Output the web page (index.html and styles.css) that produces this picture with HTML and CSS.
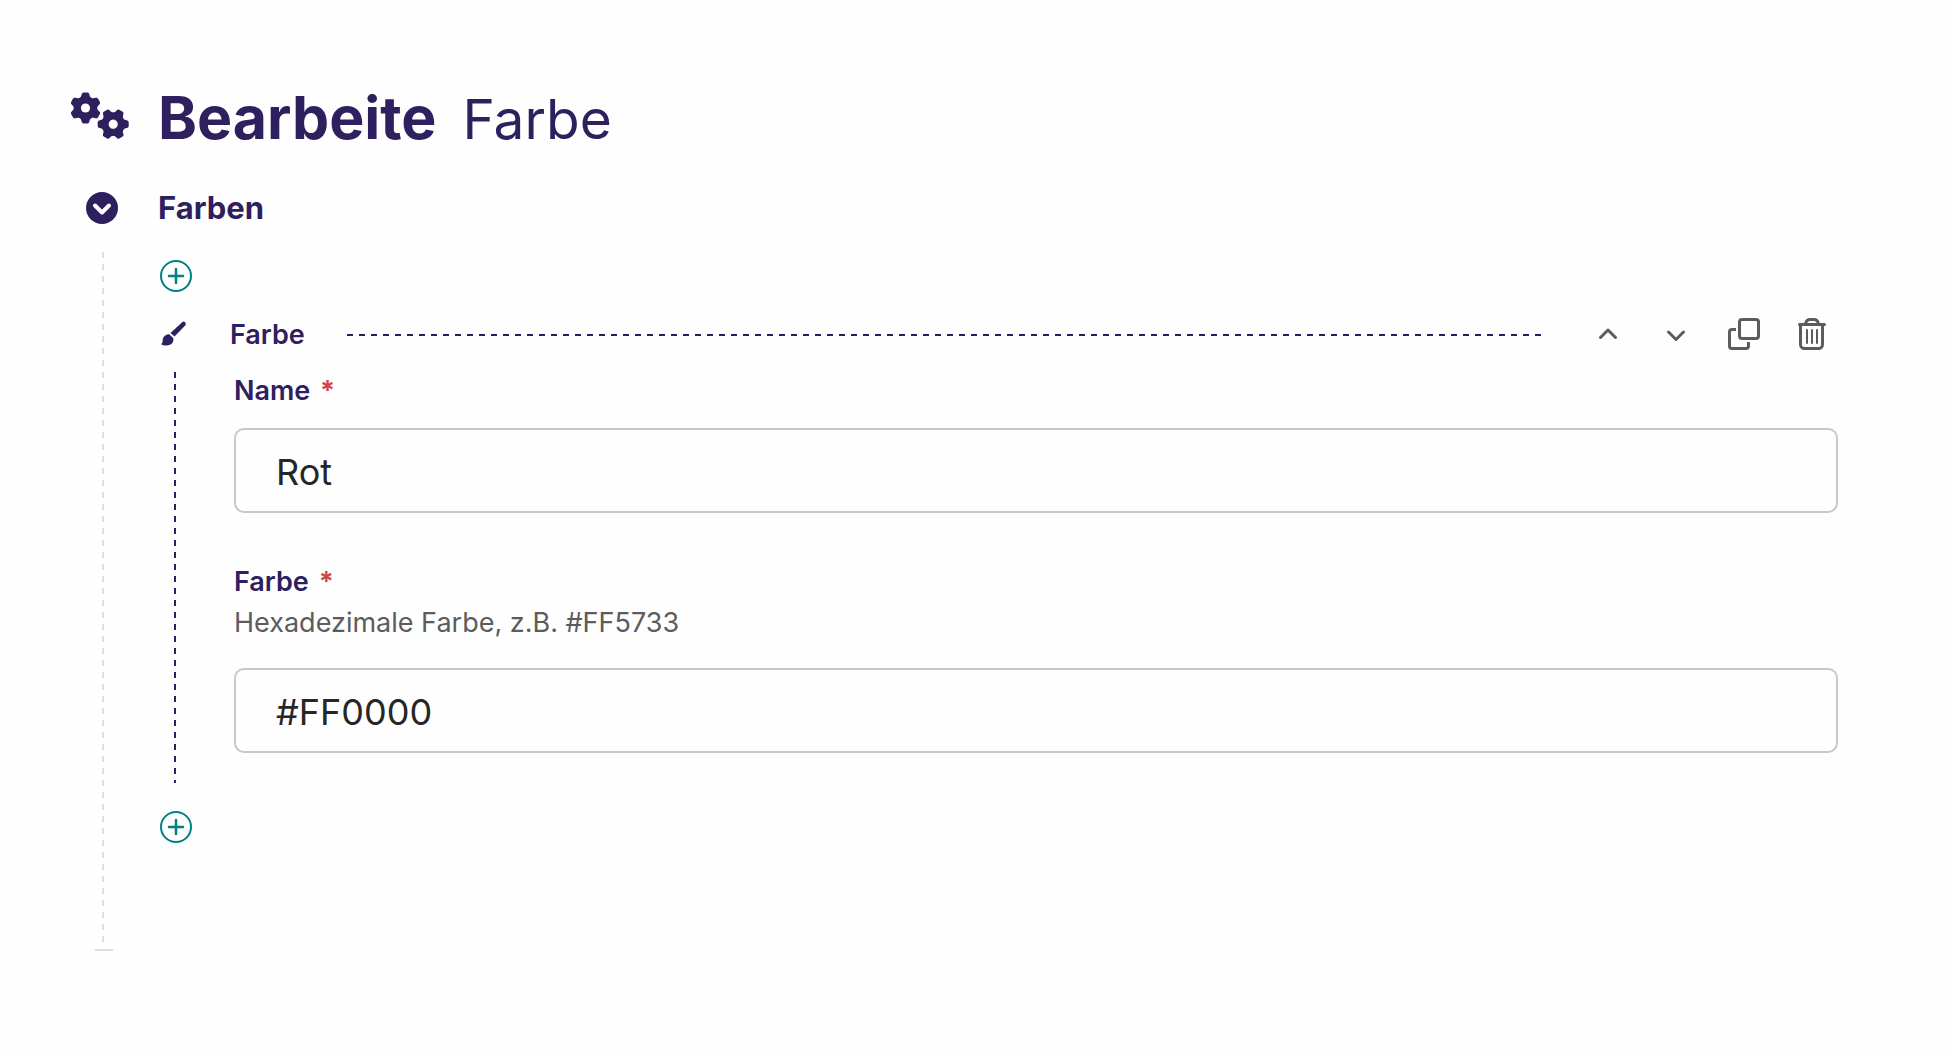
FILE: index.html
```html
<!DOCTYPE html>
<html lang="de">
<head>
<meta charset="utf-8">
<meta name="viewport" content="width=device-width, initial-scale=1">
<title>Bearbeite Farbe</title>
<link rel="stylesheet" href="styles.css">
</head>
<body>
<main class="page">
  <header class="page-head">
    <svg class="gears" viewBox="0 0 60 48" aria-hidden="true">
      <defs>
        <path id="teeth" d="M-6 -10 C-4.500 -11 -4.200 -12 -3.900 -13.500 Q-3.500 -15.500 -2 -15.500 H2 Q3.500 -15.500 3.900 -13.500 C4.200 -12 4.500 -11 6 -10 L6 10 C4.500 11 4.200 12 3.900 13.500 Q3.500 15.500 2 15.500 H-2 Q-3.500 15.500 -3.900 13.500 C-4.200 12 -4.500 11 -6 10 Z"/>
        <mask id="hub" maskUnits="userSpaceOnUse" x="-17" y="-17" width="34" height="34">
          <rect x="-17" y="-17" width="34" height="34" fill="#fff"/>
          <circle r="4.600" fill="#000"/>
        </mask>
        <g id="gear" mask="url(#hub)">
          <use href="#teeth"/>
          <use href="#teeth" transform="rotate(60)"/>
          <use href="#teeth" transform="rotate(120)"/>
        </g>
      </defs>
      <g fill="currentColor">
        <use href="#gear" transform="translate(15.500 16)"/>
        <use href="#gear" transform="translate(43.200 32.200) rotate(30)"/>
      </g>
    </svg>
    <h1 class="title"><strong>Bearbeite</strong> <span class="title-type">Farbe</span></h1>
  </header>

  <section class="group">
    <div class="group-side">
      <button class="icon-button toggle" type="button" aria-label="Farben einklappen" aria-expanded="true">
        <svg viewBox="0 0 32 32" aria-hidden="true"><circle cx="16" cy="16" r="16" fill="currentColor"/><path d="M9 13.500l7 7 7-7" fill="none" stroke="#fff" stroke-width="4" stroke-linecap="round" stroke-linejoin="round"/></svg>
      </button>
      <div class="group-rail"></div>
    </div>
    <div class="group-main">
      <h2 class="group-title">Farben</h2>
      <button class="icon-button add" type="button" aria-label="Farbe hinzufügen">
        <svg viewBox="0 0 32 32" fill="none" stroke="currentColor" stroke-width="2" aria-hidden="true"><circle cx="16" cy="16" r="15"/><path d="M16 9v14M9 16h14" stroke-width="2.500" stroke-linecap="round"/></svg>
      </button>
      <article class="block">
        <header class="block-head">
          <svg class="brush" viewBox="0 0 32 32" fill="currentColor" aria-hidden="true"><path d="M22.200 4.200a2.200 2.200 0 0 1 3 3.200L14.500 18.600 10.500 15z"/><path d="M9.200 16.200l4 3.800c.8 3-.7 5.600-3.200 6.800-3 1.200-6.500.7-9.200-.9 2-.5 1.700-1.700 1.900-4 .3-3.200 2.900-5.700 6.500-5.700z"/></svg>
          <h3 class="block-title">Farbe</h3>
          <div class="block-line"></div>
          <div class="actions">
            <button class="icon-button" type="button" aria-label="Nach oben">
              <svg viewBox="0 0 32 32" fill="none" stroke="currentColor" stroke-width="3" stroke-linecap="round" stroke-linejoin="round" aria-hidden="true"><path d="M8.500 19.500l7.500-7.500 7.500 7.500"/></svg>
            </button>
            <button class="icon-button" type="button" aria-label="Nach unten">
              <svg viewBox="0 0 32 32" fill="none" stroke="currentColor" stroke-width="3" stroke-linecap="round" stroke-linejoin="round" aria-hidden="true"><path d="M8.500 14l7.500 7.500 7.500-7.500"/></svg>
            </button>
            <button class="icon-button" type="button" aria-label="Duplizieren">
              <svg viewBox="0 0 32 32" fill="none" stroke="currentColor" stroke-width="3" aria-hidden="true"><rect x="11.500" y="1.500" width="19" height="19" rx="2.500"/><path d="M8 11.500H4A2.500 2.500 0 0 0 1.500 14v14A2.500 2.500 0 0 0 4 30.500h14a2.500 2.500 0 0 0 2.500-2.500v-4"/></svg>
            </button>
            <button class="icon-button" type="button" aria-label="Löschen">
              <svg viewBox="0 0 32 32" fill="none" stroke="currentColor" stroke-width="3" stroke-linecap="round" aria-hidden="true"><path d="M3.500 6.500h25"/><path d="M9.500 6C10 3 12 1.500 14 1.500h4c2 0 4 1.500 4.500 4.500"/><path d="M4.500 7v19.500a4 4 0 0 0 4 4h14a4 4 0 0 0 4-4V7"/><path d="M11 12v13M16 12v13M21 12v13" stroke-width="2"/></svg>
            </button>
          </div>
        </header>
        <div class="block-body">
          <div class="field">
            <label class="label" for="name">Name <span class="required">*</span></label>
            <input class="input" id="name" type="text" value="Rot" required>
          </div>
          <div class="field">
            <label class="label" for="farbe">Farbe <span class="required">*</span></label>
            <p class="hint" id="farbe-hint">Hexadezimale Farbe, z.B. #FF5733</p>
            <input class="input" id="farbe" type="text" value="#FF0000" aria-describedby="farbe-hint" required>
          </div>
        </div>
      </article>
      <button class="icon-button add" type="button" aria-label="Farbe hinzufügen">
        <svg viewBox="0 0 32 32" fill="none" stroke="currentColor" stroke-width="2" aria-hidden="true"><circle cx="16" cy="16" r="15"/><path d="M16 9v14M9 16h14" stroke-width="2.500" stroke-linecap="round"/></svg>
      </button>
    </div>
  </section>
</main>
</body>
</html>
```
FILE: styles.css
```css
* {
  box-sizing: border-box;
}

body {
  margin: 0;
  background: #fefefe;
  color: #2e1f5e;
  font-family: Inter, "Liberation Sans", sans-serif;
}

h1, h2, h3, p {
  margin: 0;
}

.page {
  padding: 82px 112px 100px 70px;
}

.page-head {
  display: flex;
  align-items: center;
  gap: 28px;
}

.gears {
  width: 60px;
  height: 48px;
  margin-bottom: 4px;
}

.title {
  display: flex;
  align-items: baseline;
  gap: 26px;
  font-size: 59px;
  line-height: 72px;
  font-weight: 400;
}

.title strong {
  font-weight: 700;
}

.title-type {
  font-size: 55px;
  line-height: 60px;
}

.icon-button {
  display: block;
  width: 32px;
  height: 32px;
  padding: 0;
  border: 0;
  background: none;
  color: #5c5c5c;
  cursor: pointer;
}

.icon-button svg {
  display: block;
  width: 32px;
  height: 32px;
}

.group {
  display: flex;
  gap: 42px;
  margin-top: 34px;
}

.group-side {
  display: flex;
  flex-direction: column;
  width: 32px;
  margin: 4px 0 0 16px;
}

.icon-button.toggle {
  color: #2e1f5e;
}

.group-rail {
  flex: 1;
  width: 18px;
  margin: 28px 0 0 9px;
  border-bottom: 2px solid #dedede;
  padding-bottom: 5px;
  background: repeating-linear-gradient(#dedede 0 6px, transparent 6px 12px) 7px 0 / 2px 100% no-repeat content-box;
}

.group-main {
  flex: 1;
  min-width: 0;
  padding-bottom: 108px;
}

.group-title {
  margin-left: -2px;
  font-size: 31px;
  line-height: 40px;
  font-weight: 700;
}

.icon-button.add {
  margin-top: 32px;
  color: #008080;
}

.block {
  margin-top: 22px;
}

.block-head {
  display: flex;
  align-items: center;
  height: 40px;
}

.brush {
  width: 32px;
  height: 32px;
  margin-right: 38px;
}

.block-title {
  padding-top: 2px;
  font-size: 27px;
  line-height: 36px;
  font-weight: 600;
}

.block-line {
  flex: 1;
  height: 2px;
  margin: 2px 50px 0 42px;
  background: repeating-linear-gradient(90deg, #2e1f5e 0 6px, transparent 6px 12px);
}

.actions {
  display: flex;
  gap: 36px;
  margin-right: 10px;
}

.block-body {
  display: flex;
  flex-direction: column;
  gap: 50px;
  margin: 18px 0 -4px 14px;
  padding: 0 0 30px 60px;
  background: repeating-linear-gradient(#2e1f5e 0 6px, transparent 6px 12px) 0 0 / 2px 100% no-repeat;
}

.label {
  display: block;
  padding-top: 1px;
  font-size: 27px;
  line-height: 36px;
  font-weight: 600;
}

.required {
  margin-left: 3px;
  color: #cf4545;
  font-weight: 700;
}

.hint {
  margin: 5px 0 27px;
  color: #5c5c5c;
  font-size: 27px;
  line-height: 36px;
}

.input {
  display: block;
  width: 100%;
  height: 85px;
  padding: 2px 40px 0;
  border: 2px solid #c8c8c8;
  border-radius: 10px;
  background: #fefefe;
  color: #262626;
  font: 400 36px Inter, "Liberation Sans", sans-serif;
}

.label + .input {
  margin-top: 19px;
}
```
